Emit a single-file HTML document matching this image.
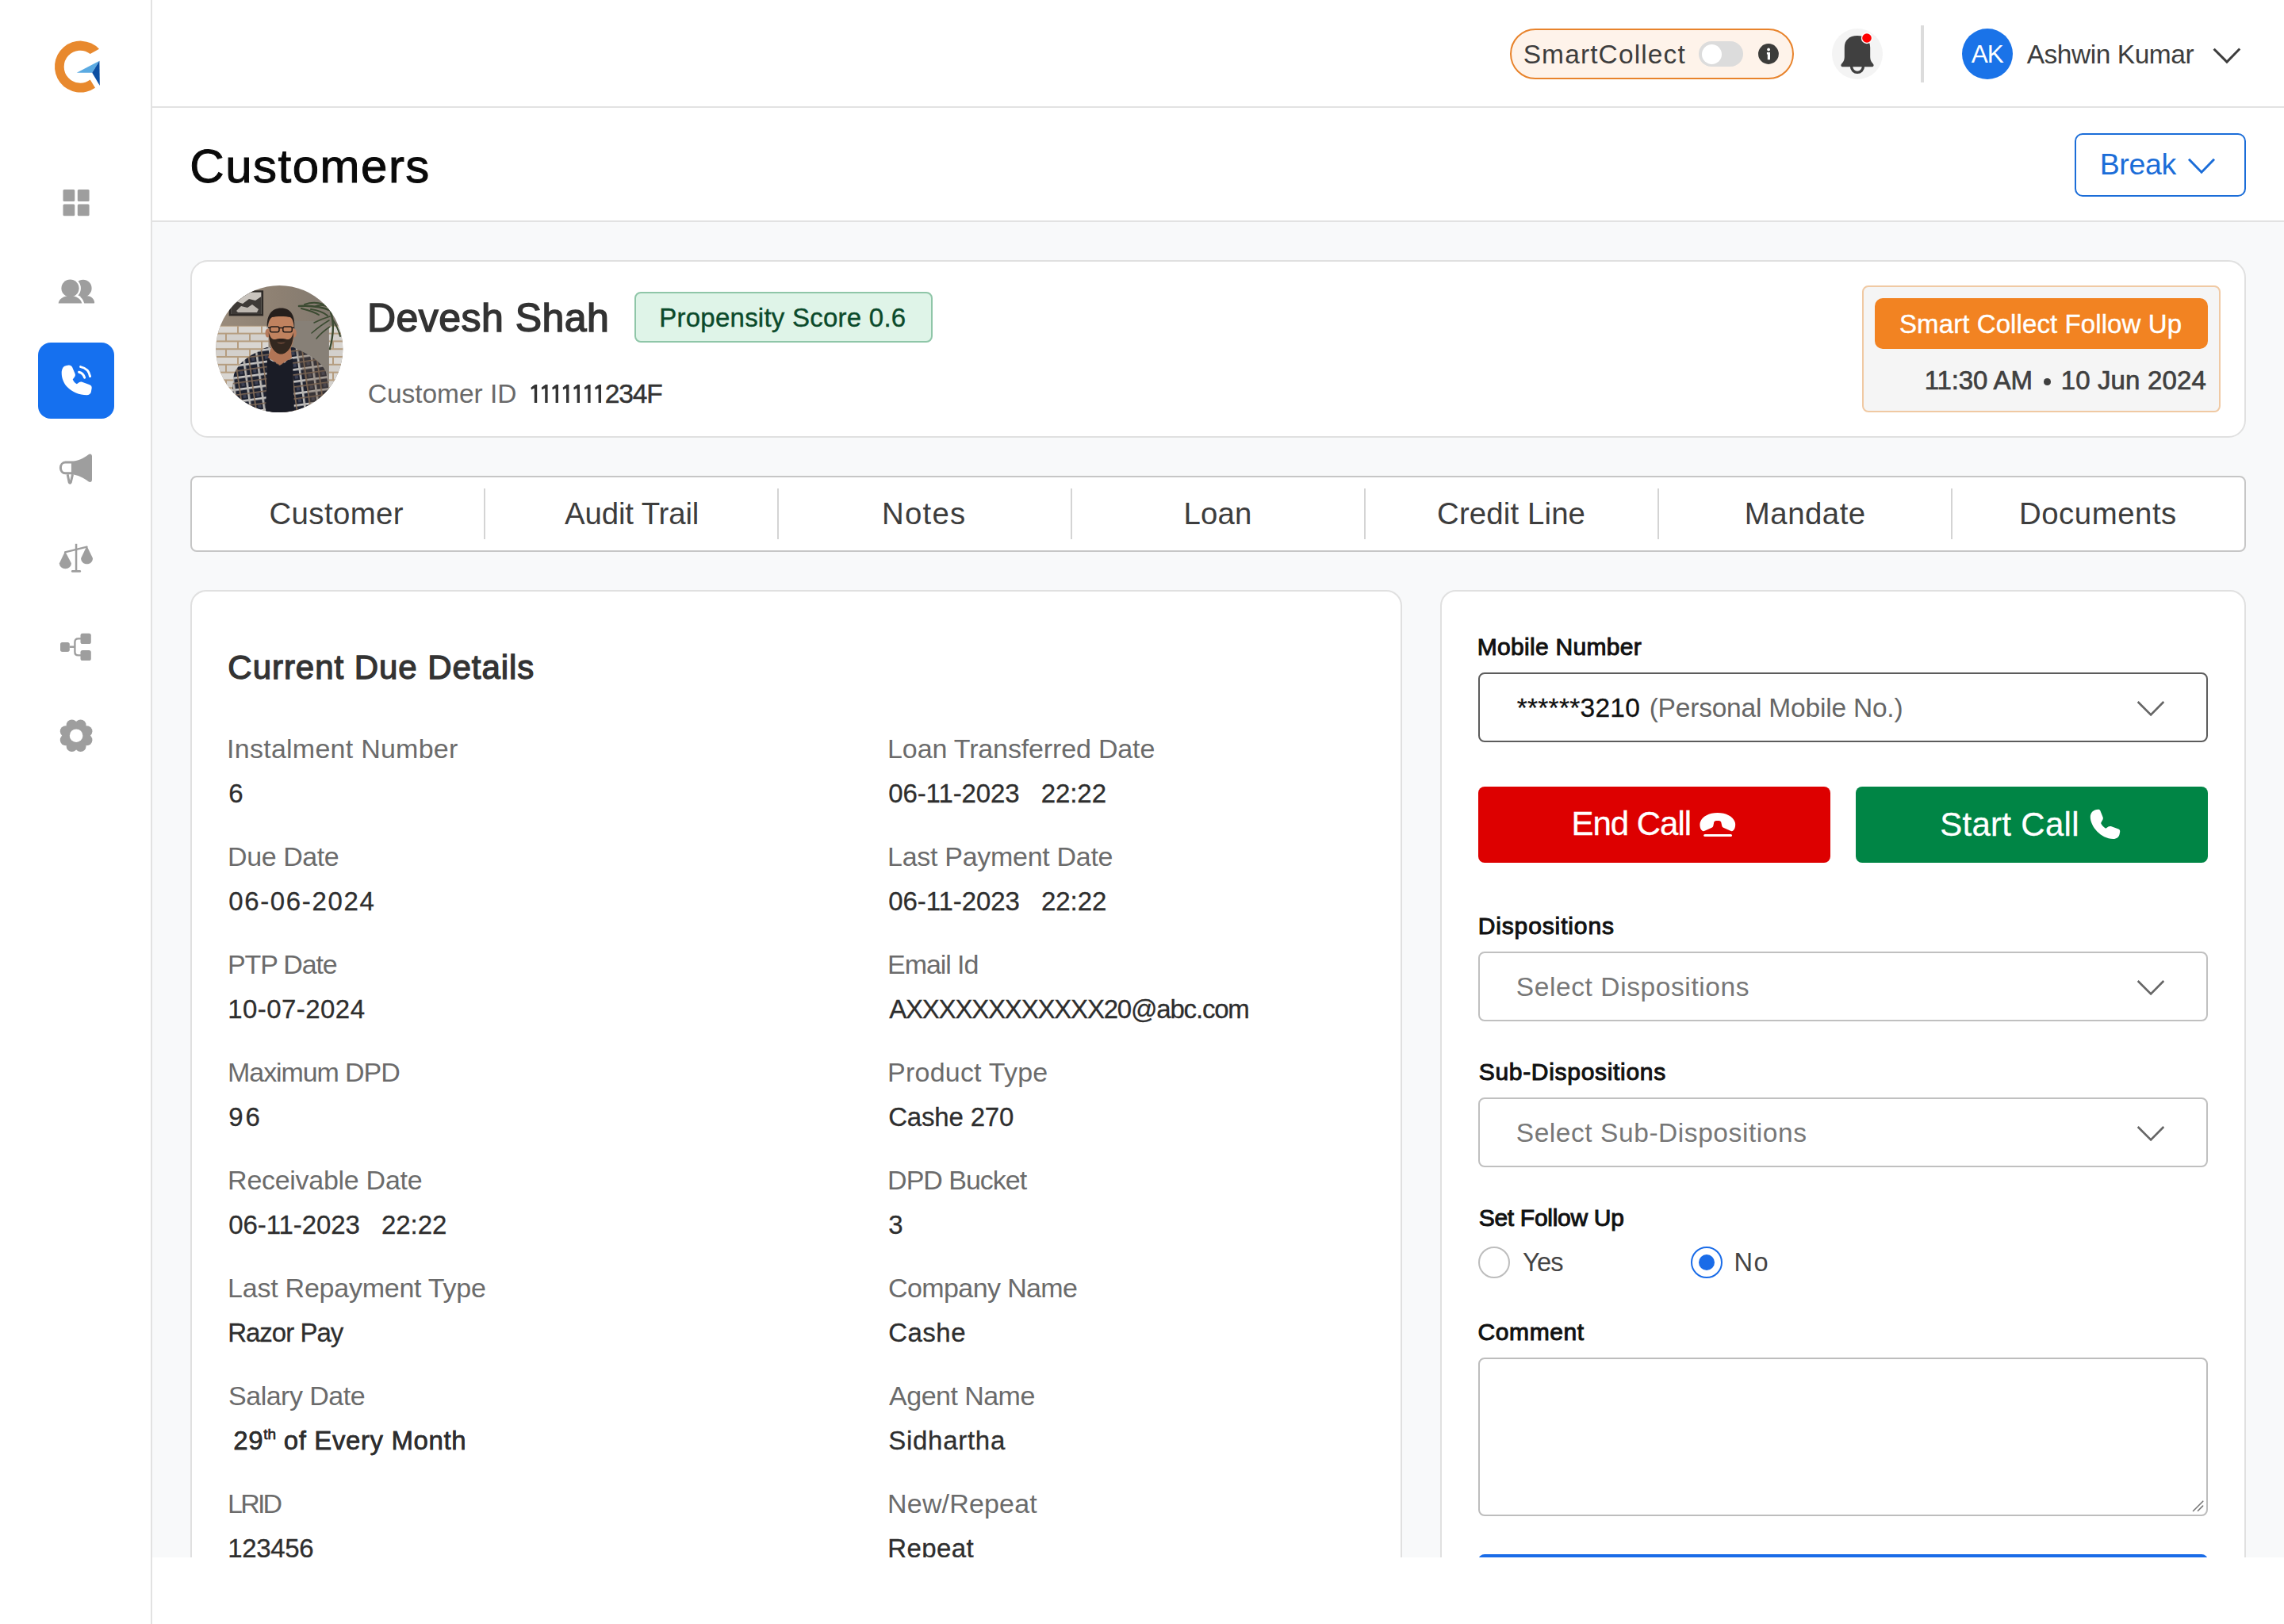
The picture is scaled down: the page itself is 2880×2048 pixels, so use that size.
<!DOCTYPE html>
<html><head><meta charset="utf-8">
<style>
html,body{margin:0;padding:0;}
body{width:2880px;height:2048px;overflow:hidden;background:#fff;position:relative;font-family:"Liberation Sans",sans-serif;}
.a{position:absolute;box-sizing:border-box;}
.t{position:absolute;white-space:nowrap;line-height:1;font-family:"Liberation Sans",sans-serif;}
svg{position:absolute;overflow:visible;}
</style></head><body>

<!-- SIDEBAR -->
<div class="a" style="left:0;top:0;width:192px;height:2048px;background:#fff;border-right:2px solid #e2e2e2;"></div>

<!-- HEADER -->
<div class="a" style="left:192px;top:0;width:2688px;height:136px;background:#fff;border-bottom:2px solid #e2e2e2;"></div>
<!-- TITLE BAR -->
<div class="a" style="left:192px;top:136px;width:2688px;height:144px;background:#fff;border-bottom:2px solid #e2e2e2;"></div>

<!-- MAIN CLIP -->
<div class="a" style="left:0;top:0;width:2880px;height:1964px;overflow:hidden;">
  <div class="a" style="left:192px;top:280px;width:2688px;height:1684px;background:#f8f9fa;"></div>

  <!-- customer card -->
  <div class="a" style="left:240px;top:328px;width:2592px;height:224px;background:#fff;border:2px solid #e0e0e0;border-radius:22px;"></div>
  <!-- propensity badge -->
  <div class="a" style="left:800px;top:368px;width:376px;height:64px;background:#dff4e8;border:2px solid #8fc6a8;border-radius:8px;"></div>
  <!-- follow up box -->
  <div class="a" style="left:2348px;top:360px;width:452px;height:160px;background:#f5f5f5;border:2px solid #f0c9a3;border-radius:8px;"></div>
  <div class="a" style="left:2364px;top:376px;width:420px;height:64px;background:#f28322;border-radius:10px;"></div>

  <!-- tabs -->
  <div class="a" style="left:240px;top:600px;width:2592px;height:96px;background:#fff;border:2px solid #c6c6c6;border-radius:8px;"></div>
  <div class="a" style="left:610px;top:616px;width:2px;height:64px;background:#d4d4d4;"></div>
  <div class="a" style="left:980px;top:616px;width:2px;height:64px;background:#d4d4d4;"></div>
  <div class="a" style="left:1350px;top:616px;width:2px;height:64px;background:#d4d4d4;"></div>
  <div class="a" style="left:1720px;top:616px;width:2px;height:64px;background:#d4d4d4;"></div>
  <div class="a" style="left:2090px;top:616px;width:2px;height:64px;background:#d4d4d4;"></div>
  <div class="a" style="left:2460px;top:616px;width:2px;height:64px;background:#d4d4d4;"></div>

  <!-- left card -->
  <div class="a" style="left:240px;top:744px;width:1528px;height:1400px;background:#fff;border:2px solid #e0e0e0;border-radius:20px;"></div>
  <!-- right card -->
  <div class="a" style="left:1816px;top:744px;width:1016px;height:1400px;background:#fff;border:2px solid #e0e0e0;border-radius:20px;"></div>

  <!-- mobile input -->
  <div class="a" style="left:1864px;top:848px;width:920px;height:88px;background:#fff;border:2.5px solid #5c5c5c;border-radius:8px;"></div>
  <!-- buttons -->
  <div class="a" style="left:1864px;top:992px;width:444px;height:96px;background:#dd0000;border-radius:8px;"></div>
  <div class="a" style="left:2340px;top:992px;width:444px;height:96px;background:#008545;border-radius:8px;"></div>
  <!-- selects -->
  <div class="a" style="left:1864px;top:1200px;width:920px;height:88px;background:#fff;border:2px solid #c0c0c0;border-radius:8px;"></div>
  <div class="a" style="left:1864px;top:1384px;width:920px;height:88px;background:#fff;border:2px solid #c0c0c0;border-radius:8px;"></div>
  <!-- textarea -->
  <div class="a" style="left:1864px;top:1712px;width:920px;height:200px;background:#fff;border:2px solid #bdbdbd;border-radius:8px;"></div>
  <!-- submit button (clipped) -->
  <div class="a" style="left:1864px;top:1960px;width:920px;height:96px;background:#1a6ce8;border-radius:8px;"></div>

  <!-- ===== LOGO ===== -->
<svg style="left:60px;top:48px" width="72" height="72" viewBox="60 48 72 72">
  <path d="M125,61.7 A32.5,32.5 0 1 0 120,110.8 L113.7,100.4 A20.5,20.5 0 1 1 113.7,67.9 Z" fill="#e8892e"/>
  <path d="M96.7,91.8 L125.4,76.7 L116.2,91.7 Z" fill="#5aaae2"/>
  <path d="M125.4,76.7 L116.2,91.7 L125.8,107.9 Z" fill="#0b4ea2"/>
</svg>

<!-- ===== SIDEBAR ICONS ===== -->
<svg style="left:60px;top:220px" width="72" height="180" viewBox="60 220 72 180">
  <g fill="#9e9e9e">
    <rect x="79.5" y="239" width="14.8" height="15" rx="1.5"/>
    <rect x="97.8" y="239" width="14.8" height="15" rx="1.5"/>
    <rect x="79.5" y="257.6" width="14.8" height="14.6" rx="1.5"/>
    <rect x="97.8" y="257.6" width="14.8" height="14.6" rx="1.5"/>
  </g>
  <!-- people -->
  <g fill="#9e9e9e">
    <circle cx="104.8" cy="363.5" r="10.8"/>
    <path d="M96,382.5 C97,376 101,373 108.5,373 C114.5,373 118.5,376.5 119.1,381 C119.3,382 118.8,382.5 118,382.5 Z"/>
  </g>
  <g fill="#9e9e9e" stroke="#fff" stroke-width="3.6">
    <circle cx="88.5" cy="363.5" r="11.6"/>
    <path d="M73.4,382.5 C74,376 80,372.6 88.4,372.6 C96.5,372.6 102.5,376 104.3,382.5 Z"/>
  </g>
  <g fill="#9e9e9e">
    <circle cx="88.5" cy="363.5" r="11.1"/>
    <path d="M73.6,382.5 C74.5,376.5 80,373.2 88.4,373.2 C96.5,373.2 101.8,376.5 103.3,382.5 Z"/>
  </g>
</svg>

<div class="a" style="left:48px;top:432px;width:96px;height:96px;background:#1570ef;border-radius:16px;"></div>
<svg style="left:70px;top:452px" width="56" height="56" viewBox="70 452 56 56">
  <path fill="#fff" d="M86.5,460.5 C88.8,460.3 90.2,461.5 91,462.8 L94.7,471.5 C95.3,473.2 94.6,474.8 93.6,476 L91.7,478.4 C92.8,480.9 94.6,483 96.9,484.3 L99.6,482.3 C100.8,481.4 102.3,481.2 103.6,481.7 L113.1,485.3 C114.9,486 115.9,487.5 115.7,489.3 L114.8,494.5 C114.3,496.8 111.8,498.2 109.6,498.2 C100,498.2 90.8,494 84.8,487.9 C80.2,483.3 77.7,476.8 77.7,470.2 C77.7,466.4 79.3,462.8 81.4,461.8 C82.9,461 84.7,460.6 86.5,460.5 Z"/>
  <path fill="none" stroke="#fff" stroke-width="3" stroke-linecap="round" d="M99.6,469.2 C103,470 105.6,472.6 106.6,476.2"/>
  <path fill="none" stroke="#fff" stroke-width="3" stroke-linecap="round" d="M101.6,462.6 C107.8,463.8 112.4,468.4 113.6,474.6"/>
</svg>

<svg style="left:60px;top:560px" width="72" height="400" viewBox="60 560 72 400">
  <!-- megaphone -->
  <g fill="#9e9e9e">
    <path d="M89.9,581.6 L89.9,598.2 C98,598.6 105.5,602.5 111.5,607.2 C113.6,608.8 116,607.8 116,605 L116,575.3 C116,572.6 113.6,571.6 111.5,573.2 C105.5,578 98,581.4 89.9,581.6 Z"/>
  </g>
  <path fill="none" stroke="#9e9e9e" stroke-width="3" stroke-linejoin="round" d="M90,583.1 L82.4,583.1 C78.8,583.1 76.4,586.2 76.4,589.9 C76.4,593.6 78.8,596.7 82.4,596.7 L90,596.7"/>
  <path fill="none" stroke="#9e9e9e" stroke-width="3" stroke-linejoin="round" d="M85.2,598.2 L87.2,608.2 C87.5,609.5 89,609.5 89.3,608.2 L91.6,598.2"/>
  <!-- scales -->
  <g fill="#9e9e9e">
    <rect x="94.8" y="685.8" width="2.5" height="34"/>
    <rect x="89.9" y="719" width="12.2" height="2.8" rx="1.4"/>
    <path d="M82.1,695.2 L74.9,710.3 C74.9,714.6 78.2,717.2 82.4,717.2 C86.6,717.2 89.9,714.6 89.9,710.3 Z"/>
    <path d="M109.5,688.6 L102.1,704 C102.1,708.4 105.4,711.3 109.6,711.3 C113.8,711.3 117,708.4 117,704 Z"/>
  </g>
  <path stroke="#9e9e9e" stroke-width="2.4" stroke-linecap="round" d="M82.1,696.3 L109.5,689.6"/>
  <!-- hierarchy -->
  <g fill="#9e9e9e">
    <rect x="76" y="810" width="11.8" height="11.9" rx="2.6"/>
    <rect x="101.5" y="798.8" width="13.3" height="13.3" rx="2.6"/>
    <rect x="101.5" y="819.9" width="13.3" height="13.1" rx="2.6"/>
  </g>
  <path fill="none" stroke="#9e9e9e" stroke-width="2.4" d="M87.7,815.8 L94.4,815.8 M102,805.4 L98.6,805.4 C95.9,805.4 94.4,807.2 94.4,809.8 L94.4,822.2 C94.4,824.8 95.9,826.4 98.6,826.4 L102,826.4"/>
  <!-- gear -->
  <g fill="#9e9e9e" transform="translate(96.1,927.7)">
    <circle r="15.5"/>
    <circle cx="5.5" cy="-13.3" r="7"/><circle cx="13.3" cy="-5.5" r="7"/>
    <circle cx="13.3" cy="5.5" r="7"/><circle cx="5.5" cy="13.3" r="7"/>
    <circle cx="-5.5" cy="13.3" r="7"/><circle cx="-13.3" cy="5.5" r="7"/>
    <circle cx="-13.3" cy="-5.5" r="7"/><circle cx="-5.5" cy="-13.3" r="7"/>
    <circle r="8.3" fill="#fff"/>
  </g>
</svg>

<!-- ===== HEADER ===== -->
<div class="a" style="left:1904px;top:36px;width:358px;height:64px;background:#fef3ea;border:2px solid #e8832b;border-radius:32px;"></div>
<div class="a" style="left:2142px;top:52px;width:56px;height:32px;background:#dcdcdc;border-radius:16px;"></div>
<div class="a" style="left:2145.5px;top:55.5px;width:25px;height:25px;background:#fff;border-radius:50%;"></div>
<svg style="left:2210px;top:48px" width="40" height="40" viewBox="2210 48 40 40">
  <circle cx="2229.95" cy="68" r="12.9" fill="#3c3c3a"/>
  <circle cx="2230.1" cy="62.5" r="1.9" fill="#fff"/>
  <path fill="#fff" d="M2227.9,65.9 L2232,65.9 L2232,75.3 L2228.8,75.3 L2228.8,68.4 L2227.9,68.4 Z"/>
</svg>
<svg style="left:2300px;top:30px" width="84" height="76" viewBox="2300 30 84 76">
  <circle cx="2342" cy="68" r="32" fill="#f4f4f4"/>
  <path fill="#404040" d="M2342,45 C2331.5,45 2325.8,51 2325.8,60 L2325.8,72 C2325.8,76 2324,78.5 2322.3,80.2 C2320.6,82 2321.3,84.2 2324,84.2 L2360,84.2 C2362.7,84.2 2363.4,82 2361.7,80.2 C2360,78.5 2358.2,76 2358.2,72 L2358.2,60 C2358.2,51 2352.5,45 2342,45 Z"/>
  <path fill="none" stroke="#404040" stroke-width="3.4" d="M2334.6,84 A7.4,7.4 0 0 0 2349.4,84"/>
  <circle cx="2354" cy="48" r="7.2" fill="#fff"/>
  <circle cx="2354" cy="48" r="5.8" fill="#f00"/>
</svg>
<div class="a" style="left:2422px;top:32px;width:4px;height:72px;background:#dcdcdc;"></div>
<div class="a" style="left:2474px;top:36px;width:64px;height:64px;background:#1a73e8;border-radius:50%;"></div>
<svg style="left:2780px;top:50px" width="56" height="40" viewBox="2780 50 56 40">
  <path fill="none" stroke="#3d3d3d" stroke-width="3" d="M2791.6,61.7 L2808,78 L2824.2,61.5"/>
</svg>

<!-- Break button -->
<div class="a" style="left:2616px;top:168px;width:216px;height:80px;background:#fff;border:2.5px solid #1b6dd8;border-radius:10px;"></div>
<svg style="left:2750px;top:190px" width="56" height="40" viewBox="2750 190 56 40">
  <path fill="none" stroke="#1b6dd8" stroke-width="3" d="M2760,200.8 L2776,217.2 L2792,200.8"/>
</svg>

<!-- ===== PHOTO ===== -->
<svg style="left:272px;top:360px" width="161" height="161" viewBox="272 360 161 161">
  <defs>
    <clipPath id="pc"><circle cx="352.3" cy="440" r="80"/></clipPath>
    <pattern id="brick" x="0" y="410.8" width="30" height="19.6" patternUnits="userSpaceOnUse">
      <rect width="30" height="19.6" fill="#b59d80"/>
      <rect x="1" y="1" width="28" height="7.8" fill="#d9d6d2"/>
      <rect x="-14" y="10.8" width="28" height="7.8" fill="#d3d0cc"/>
      <rect x="16" y="10.8" width="28" height="7.8" fill="#d3d0cc"/>
    </pattern>
    <pattern id="plaid" x="291" y="437" width="17" height="15" patternUnits="userSpaceOnUse" patternTransform="rotate(-8)">
      <rect width="17" height="15" fill="#1e2230"/>
      <rect x="0" y="0" width="17" height="2.6" fill="#c8c6c4"/>
      <rect x="0" y="0" width="2.6" height="15" fill="#b9b6b2"/>
      <rect x="7" y="0" width="1.6" height="15" fill="#8c735c"/>
      <rect x="0" y="7" width="17" height="1.6" fill="#7d6857"/>
      <rect x="11" y="9" width="4" height="4" fill="#3b3f52"/>
    </pattern>
    <linearGradient id="wall" x1="0" y1="0" x2="1" y2="0">
      <stop offset="0" stop-color="#9a8c7c"/>
      <stop offset="0.5" stop-color="#8d8072"/>
      <stop offset="1" stop-color="#7f786f"/>
    </linearGradient>
  </defs>
  <g clip-path="url(#pc)">
    <rect x="272" y="360" width="161" height="161" fill="url(#wall)"/>
    <!-- frame -->
    <rect x="288.7" y="366.3" width="43.4" height="32.1" fill="#2e2a27"/>
    <rect x="291.2" y="368.6" width="38.2" height="27.4" fill="#c9c4be"/>
    <path d="M291.2,396 L291.2,384 L298,380 L306,383 L314,377 L322,379 L329.4,374 L329.4,396 Z" fill="#3e3a37"/>
    <path d="M298,392 L304,386 L312,388 L318,384 L326,390 L324,394 L300,394 Z" fill="#bdb7b0"/>
    <!-- bricks left -->
    <rect x="272" y="410.8" width="66.5" height="85" fill="url(#brick)"/>
    <!-- column -->
    <rect x="370.4" y="405" width="44.5" height="90" fill="#878077"/>
    <!-- bricks right -->
    <rect x="414.9" y="410.8" width="18" height="80" fill="url(#brick)"/>
    <!-- plant -->
    <g fill="none" stroke="#3b4a31" stroke-linecap="round">
      <path d="M377,386 C392,385 406,387 418,392 C424,395 428,400 431,405" stroke-width="2.6"/>
      <path d="M380,389 C388,391 396,393 402,397" stroke-width="2"/>
      <path d="M384,384 C392,381 400,381 408,384" stroke-width="2"/>
      <path d="M392,390 C400,391 408,394 413,398" stroke-width="2"/>
      <path d="M398,386 C404,384 410,385 416,388" stroke-width="1.8"/>
      <path d="M417,394 C421,405 421,420 416,440" stroke-width="2.4"/>
      <path d="M415,404 C408,408 400,414 393,420" stroke-width="1.6"/>
      <path d="M416,412 C410,416 404,421 399,427" stroke-width="1.6"/>
      <path d="M416,399 C409,401 402,404 396,407" stroke-width="1.6"/>
      <path d="M420,404 C424,410 427,416 429,424" stroke-width="2"/>
      <path d="M422,398 C426,400 429,403 432,407" stroke-width="2"/>
    </g>
    <!-- shirt -->
    <path d="M292,521 L294,476 C298,458 314,448 336,438 L370,438 C392,448 410,458 414,478 L418,521 Z" fill="url(#plaid)"/>
    <path d="M372,440 C392,448 410,458 414,478 L418,521 L392,521 C390,500 384,470 372,440 Z" fill="#6b5545" opacity="0.35"/>
    <!-- t-shirt -->
    <path d="M337,452 L352.5,461 L369,452 L371,521 L335,521 Z" fill="#1a1c26"/>
    <!-- neck -->
    <path d="M342.5,436 L366.3,436 L368,451 L353,460.5 L338,451 Z" fill="#b27556"/>
    <!-- ears -->
    <ellipse cx="337.5" cy="420" rx="3" ry="5.5" fill="#b57a5c"/>
    <ellipse cx="370.8" cy="420" rx="3" ry="5.5" fill="#b57a5c"/>
    <!-- face -->
    <path d="M338.5,412 C338.5,398 345,391 354.5,391 C364,391 370.2,398 370.2,412 L370,426 C369.5,438 362.5,445.5 354.5,445.5 C346.5,445.5 339.5,438 339,426 Z" fill="#c0825f"/>
    <!-- beard -->
    <path d="M338.8,419 C339,436 346,446.5 354.5,446.5 C363,446.5 370,436 370.2,419 C368.5,425 366,428.5 362,428 C358,427 351,427 347,428 C343,428.5 340.5,425 338.8,419 Z" fill="#33271f"/>
    <path d="M347.5,428.5 C351,426.5 358,426.5 361.5,428.5 C358,430 351,430 347.5,428.5 Z" fill="#2a1f1a"/>
    <path d="M349,431.5 C352,432.5 357,432.5 360,431.5 C357,434 352,434 349,431.5 Z" fill="#8a5a45"/>
    <!-- hair -->
    <path d="M337,415 C335.5,398 342,388.5 354.5,388.5 C367,388.5 372.5,398 371.2,415 C370.5,407 369,402 366,400 C361,398.5 348,398.5 343,400 C340,402 338,407 337,415 Z" fill="#261f1c"/>
    <!-- glasses -->
    <g fill="none" stroke="#241c19" stroke-width="1.5">
      <rect x="340.5" y="412" width="11.5" height="6.8" rx="2.2"/>
      <rect x="356.8" y="412" width="11.5" height="6.8" rx="2.2"/>
      <path d="M352,413.5 L356.8,413.5 M338,413.2 L340.5,413.2 M368.3,413.2 L371,413.2"/>
    </g>
  </g>
</svg>

<!-- ===== RIGHT PANEL ICONS ===== -->
<svg style="left:2680px;top:870px" width="64" height="600" viewBox="2680 870 64 600">
  <g fill="none" stroke="#666" stroke-width="2.6">
    <path d="M2695.7,885 L2712.1,901.5 L2728.3,885"/>
    <path d="M2695.7,1237 L2712.1,1253.5 L2728.3,1237"/>
    <path d="M2695.7,1421 L2712.1,1437.5 L2728.3,1421"/>
  </g>
</svg>
<svg style="left:2130px;top:1015px" width="70" height="50" viewBox="2130 1015 70 50">
  <path fill="#fff" d="M2165.7,1024.9 C2155,1024.9 2146.5,1029.5 2144,1036.5 C2142.8,1040 2143.5,1045 2146,1047.3 C2147,1048.3 2148.3,1048.4 2149.5,1047.8 L2158.5,1043.8 C2159.6,1043.3 2160.2,1042.5 2160.4,1041.3 L2161.1,1037.4 C2161.4,1035.9 2162.6,1035.2 2164,1035.1 L2167.5,1035.1 C2169,1035.2 2170.1,1036 2170.4,1037.4 L2171.2,1041.3 C2171.4,1042.5 2172,1043.3 2173.1,1043.8 L2182.1,1047.8 C2183.3,1048.4 2184.6,1048.3 2185.6,1047.3 C2188.1,1045 2188.8,1040 2187.6,1036.5 C2185.1,1029.5 2176.6,1024.9 2165.7,1024.9 Z"/>
  <rect x="2148.2" y="1052" width="35.8" height="3" rx="1.5" fill="#fff"/>
</svg>
<svg style="left:2625px;top:1012px" width="60" height="56" viewBox="2625 1012 60 56">
  <path fill="#fff" d="M2645.9,1020.7 C2647,1020.7 2647.8,1021.2 2648.3,1022.2 L2651.6,1030.6 C2652.2,1032.2 2651.7,1033.8 2650.6,1035 L2649.1,1038 C2650.5,1041 2652.8,1043.4 2655.3,1044.8 L2658.4,1042.6 C2659.4,1041.9 2660.6,1041.7 2661.8,1042.1 L2671.3,1045.5 C2672.7,1046.1 2673.4,1047.4 2673.2,1048.9 L2672.6,1052 C2671.9,1055.8 2668.8,1058 2664.8,1058 C2648.5,1057.6 2636,1042 2635.8,1030.5 C2635.7,1025 2639.5,1020.8 2645.9,1020.7 Z"/>
</svg>

<!-- radios -->
<div class="a" style="left:1864px;top:1572px;width:40px;height:40px;border:2px solid #bdbdbd;border-radius:50%;background:#fff;"></div>
<div class="a" style="left:2132px;top:1572px;width:40px;height:40px;border:2.6px solid #1a6ce8;border-radius:50%;background:#fff;"></div>
<div class="a" style="left:2142px;top:1582px;width:20px;height:20px;background:#1a6ce8;border-radius:50%;"></div>

<!-- resize handle -->
<svg style="left:2760px;top:1885px" width="24" height="24" viewBox="2760 1885 24 24">
  <path stroke="#777" stroke-width="1.6" stroke-linecap="round" d="M2765.5,1905.5 L2777.8,1893.2 M2771.5,1905.2 L2777.6,1899.1"/>
</svg>

<!-- customer id ones -->
<svg style="left:660px;top:480px" width="110" height="32" viewBox="660 480 110 32">
  <path fill="#333" d="M673.8,485 L677.2,485 L677.2,508 L673.8,508 Z M674.2,485 L676.2,488.2 L670.0,491.6 L669.4,488.8 Z M687.2,485 L690.6,485 L690.6,508 L687.2,508 Z M687.6,485 L689.6,488.2 L683.4,491.6 L682.8,488.8 Z M700.6,485 L704.0,485 L704.0,508 L700.6,508 Z M701.0,485 L703.0,488.2 L696.8,491.6 L696.2,488.8 Z M714.0,485 L717.4,485 L717.4,508 L714.0,508 Z M714.4,485 L716.4,488.2 L710.2,491.6 L709.6,488.8 Z M727.6,485 L731.0,485 L731.0,508 L727.6,508 Z M728.0,485 L730.0,488.2 L723.8,491.6 L723.2,488.8 Z M741.2,485 L744.6,485 L744.6,508 L741.2,508 Z M741.6,485 L743.6,488.2 L737.4,491.6 L736.8,488.8 Z M754.6,485 L758.0,485 L758.0,508 L754.6,508 Z M755.0,485 L757.0,488.2 L750.8,491.6 L750.2,488.8 Z "/>
</svg>

<div class="a" style="left:2577px;top:477px;width:8.6px;height:8.6px;border-radius:50%;background:#404040;"></div>
<div class="t" id="smart" style="left:1920.66px;top:51.53px;font-size:33.5px;color:#3d3d3d;letter-spacing:1.122px;">SmartCollect</div>
<div class="t" id="ak" style="left:2485.80px;top:53.43px;font-size:31.5px;color:#fff;letter-spacing:-1.000px;">AK</div>
<div class="t" id="ashwin" style="left:2555.66px;top:51.83px;font-size:33.5px;color:#3d3d3d;letter-spacing:-0.455px;">Ashwin Kumar</div>
<div class="t" id="title" style="left:239.30px;top:179.60px;font-size:60px;color:#0a0a0a;letter-spacing:1.500px;-webkit-text-stroke:1.0px #0a0a0a;">Customers</div>
<div class="t" id="break" style="left:2647.67px;top:189.22px;font-size:37.5px;color:#1b6dd8;letter-spacing:-0.350px;">Break</div>
<div class="t" id="devesh" style="left:462.90px;top:375.80px;font-size:50px;color:#333;letter-spacing:0.480px;-webkit-text-stroke:1.5px #333;">Devesh Shah</div>
<div class="t" id="prop" style="left:831.29px;top:384.15px;font-size:33px;color:#0b4a2b;letter-spacing:0.240px;-webkit-text-stroke:0.4px #0b4a2b;">Propensity Score 0.6</div>
<div class="t" id="cid" style="left:463.75px;top:479.52px;font-size:33.5px;color:#6a6a6a;letter-spacing:-0.040px;">Customer ID</div>
<div class="t" id="cidv" style="left:762.66px;top:479.52px;font-size:33.5px;color:#333;letter-spacing:-1.132px;-webkit-text-stroke:0.5px #333;">234F</div>
<div class="t" id="scfu" style="left:2394.99px;top:391.65px;font-size:33px;color:#fff;letter-spacing:0.096px;-webkit-text-stroke:0.4px #fff;">Smart Collect Follow Up</div>
<div class="t" id="fdate1" style="left:2426.69px;top:463.35px;font-size:33px;color:#404040;letter-spacing:-0.101px;-webkit-text-stroke:0.7px #404040;">11:30 AM</div>
<div class="t" id="fdate2" style="left:2598.69px;top:463.35px;font-size:33px;color:#404040;letter-spacing:0.140px;-webkit-text-stroke:0.7px #404040;">10 Jun 2024</div>
<div class="t" id="tab0" style="left:339.51px;top:628.56px;font-size:38.4px;color:#3d3d3d;letter-spacing:0.378px;">Customer</div>
<div class="t" id="tab1" style="left:712.01px;top:628.56px;font-size:38.4px;color:#3d3d3d;letter-spacing:-0.140px;">Audit Trail</div>
<div class="t" id="tab2" style="left:1111.91px;top:628.56px;font-size:38.4px;color:#3d3d3d;letter-spacing:1.250px;">Notes</div>
<div class="t" id="tab3" style="left:1492.61px;top:628.56px;font-size:38.4px;color:#3d3d3d;letter-spacing:0.133px;">Loan</div>
<div class="t" id="tab4" style="left:1812.11px;top:628.56px;font-size:38.4px;color:#3d3d3d;letter-spacing:0.120px;">Credit Line</div>
<div class="t" id="tab5" style="left:2199.81px;top:628.56px;font-size:38.4px;color:#3d3d3d;letter-spacing:0.500px;">Mandate</div>
<div class="t" id="tab6" style="left:2546.01px;top:628.56px;font-size:38.4px;color:#3d3d3d;letter-spacing:0.516px;">Documents</div>
<div class="t" id="cdd" style="left:287.36px;top:820.80px;font-size:42px;color:#333;letter-spacing:0.952px;-webkit-text-stroke:1.3px #333;">Current Due Details</div>
<div class="t" id="lL0" style="left:286.12px;top:927.10px;font-size:34px;color:#6b6b6b;letter-spacing:0.250px;">Instalment Number</div>
<div class="t" id="vL0" style="left:288.19px;top:983.75px;font-size:33px;color:#2e2e2e;letter-spacing:0.000px;-webkit-text-stroke:0.3px #2e2e2e;">6</div>
<div class="t" id="lR0" style="left:1119.12px;top:927.10px;font-size:34px;color:#6b6b6b;letter-spacing:-0.150px;">Loan Transferred Date</div>
<div class="t" id="vR0" style="left:1120.19px;top:983.75px;font-size:33px;color:#2e2e2e;letter-spacing:-0.097px;-webkit-text-stroke:0.3px #2e2e2e;">06-11-2023&nbsp;&nbsp;&nbsp;22:22</div>
<div class="t" id="lL1" style="left:287.12px;top:1063.10px;font-size:34px;color:#6b6b6b;letter-spacing:-0.428px;">Due Date</div>
<div class="t" id="vL1" style="left:288.19px;top:1119.75px;font-size:33px;color:#2e2e2e;letter-spacing:1.650px;-webkit-text-stroke:0.3px #2e2e2e;">06-06-2024</div>
<div class="t" id="lR1" style="left:1119.12px;top:1063.10px;font-size:34px;color:#6b6b6b;letter-spacing:-0.299px;">Last Payment Date</div>
<div class="t" id="vR1" style="left:1120.19px;top:1119.75px;font-size:33px;color:#2e2e2e;letter-spacing:-0.076px;-webkit-text-stroke:0.3px #2e2e2e;">06-11-2023&nbsp;&nbsp;&nbsp;22:22</div>
<div class="t" id="lL2" style="left:287.12px;top:1199.10px;font-size:34px;color:#6b6b6b;letter-spacing:-1.177px;">PTP Date</div>
<div class="t" id="vL2" style="left:287.19px;top:1255.75px;font-size:33px;color:#2e2e2e;letter-spacing:0.444px;-webkit-text-stroke:0.3px #2e2e2e;">10-07-2024</div>
<div class="t" id="lR2" style="left:1119.12px;top:1199.10px;font-size:34px;color:#6b6b6b;letter-spacing:-1.084px;">Email Id</div>
<div class="t" id="vR2" style="left:1121.19px;top:1255.75px;font-size:33px;color:#2e2e2e;letter-spacing:-1.201px;-webkit-text-stroke:0.3px #2e2e2e;">AXXXXXXXXXXXX20@abc.com</div>
<div class="t" id="lL3" style="left:287.12px;top:1335.10px;font-size:34px;color:#6b6b6b;letter-spacing:-1.100px;">Maximum DPD</div>
<div class="t" id="vL3" style="left:288.19px;top:1391.75px;font-size:33px;color:#2e2e2e;letter-spacing:3.000px;-webkit-text-stroke:0.3px #2e2e2e;">96</div>
<div class="t" id="lR3" style="left:1119.12px;top:1335.10px;font-size:34px;color:#6b6b6b;letter-spacing:0.213px;">Product Type</div>
<div class="t" id="vR3" style="left:1120.19px;top:1391.75px;font-size:33px;color:#2e2e2e;letter-spacing:-0.175px;-webkit-text-stroke:0.3px #2e2e2e;">Cashe 270</div>
<div class="t" id="lL4" style="left:287.12px;top:1471.10px;font-size:34px;color:#6b6b6b;letter-spacing:-0.286px;">Receivable Date</div>
<div class="t" id="vL4" style="left:288.19px;top:1527.75px;font-size:33px;color:#2e2e2e;letter-spacing:-0.079px;-webkit-text-stroke:0.3px #2e2e2e;">06-11-2023&nbsp;&nbsp;&nbsp;22:22</div>
<div class="t" id="lR4" style="left:1119.12px;top:1471.10px;font-size:34px;color:#6b6b6b;letter-spacing:-1.017px;">DPD Bucket</div>
<div class="t" id="vR4" style="left:1120.19px;top:1527.75px;font-size:33px;color:#2e2e2e;letter-spacing:0.000px;-webkit-text-stroke:0.3px #2e2e2e;">3</div>
<div class="t" id="lL5" style="left:287.12px;top:1607.10px;font-size:34px;color:#6b6b6b;letter-spacing:-0.246px;">Last Repayment Type</div>
<div class="t" id="vL5" style="left:287.19px;top:1663.75px;font-size:33px;color:#2e2e2e;letter-spacing:-1.000px;-webkit-text-stroke:0.3px #2e2e2e;">Razor Pay</div>
<div class="t" id="lR5" style="left:1120.12px;top:1607.10px;font-size:34px;color:#6b6b6b;letter-spacing:-0.617px;">Company Name</div>
<div class="t" id="vR5" style="left:1120.19px;top:1663.75px;font-size:33px;color:#2e2e2e;letter-spacing:0.500px;-webkit-text-stroke:0.3px #2e2e2e;">Cashe</div>
<div class="t" id="lL6" style="left:288.12px;top:1743.10px;font-size:34px;color:#6b6b6b;letter-spacing:-0.520px;">Salary Date</div>
<div class="t" id="lR6" style="left:1121.12px;top:1743.10px;font-size:34px;color:#6b6b6b;letter-spacing:-0.532px;">Agent Name</div>
<div class="t" id="vR6" style="left:1120.19px;top:1799.75px;font-size:33px;color:#2e2e2e;letter-spacing:0.725px;-webkit-text-stroke:0.3px #2e2e2e;">Sidhartha</div>
<div class="t" id="lL7" style="left:287.12px;top:1879.10px;font-size:34px;color:#6b6b6b;letter-spacing:-2.799px;">LRID</div>
<div class="t" id="vL7" style="left:287.19px;top:1935.75px;font-size:33px;color:#2e2e2e;letter-spacing:-0.320px;-webkit-text-stroke:0.3px #2e2e2e;">123456</div>
<div class="t" id="lR7" style="left:1119.12px;top:1879.10px;font-size:34px;color:#6b6b6b;letter-spacing:0.159px;">New/Repeat</div>
<div class="t" id="vR7" style="left:1119.19px;top:1935.75px;font-size:33px;color:#2e2e2e;letter-spacing:0.400px;-webkit-text-stroke:0.3px #2e2e2e;">Repeat</div>
<div class="t" id="mob" style="left:1862.80px;top:800.80px;font-size:30px;color:#111;letter-spacing:0.285px;-webkit-text-stroke:1.0px #111;">Mobile Number</div>
<div class="t" id="mobv1" style="left:1912.66px;top:875.82px;font-size:33.5px;color:#111;letter-spacing:0.276px;-webkit-text-stroke:0.3px #111;">******3210</div>
<div class="t" id="mobv2" style="left:2079.66px;top:875.82px;font-size:33.5px;color:#666;letter-spacing:-0.200px;">(Personal Mobile No.)</div>
<div class="t" id="endc" style="left:1981.46px;top:1018.30px;font-size:42px;color:#fff;letter-spacing:-1.025px;-webkit-text-stroke:0.3px #fff;">End Call</div>
<div class="t" id="startc" style="left:2446.16px;top:1018.80px;font-size:42px;color:#fff;letter-spacing:0.294px;-webkit-text-stroke:0.3px #fff;">Start Call</div>
<div class="t" id="disp" style="left:1863.70px;top:1153.20px;font-size:30px;color:#111;letter-spacing:0.869px;-webkit-text-stroke:1.0px #111;">Dispositions</div>
<div class="t" id="seld" style="left:1911.76px;top:1227.53px;font-size:33.5px;color:#777;letter-spacing:0.598px;">Select Dispositions</div>
<div class="t" id="subd" style="left:1864.70px;top:1336.50px;font-size:30px;color:#111;letter-spacing:0.697px;-webkit-text-stroke:1.0px #111;">Sub-Dispositions</div>
<div class="t" id="selsub" style="left:1911.76px;top:1411.93px;font-size:33.5px;color:#777;letter-spacing:0.562px;">Select Sub-Dispositions</div>
<div class="t" id="sfu" style="left:1864.70px;top:1520.50px;font-size:30px;color:#111;letter-spacing:-0.298px;-webkit-text-stroke:1.0px #111;">Set Follow Up</div>
<div class="t" id="yes" style="left:1920.12px;top:1575.79px;font-size:32.6px;color:#444;letter-spacing:-0.900px;">Yes</div>
<div class="t" id="no" style="left:2186.52px;top:1575.79px;font-size:32.6px;color:#444;letter-spacing:1.400px;">No</div>
<div class="t" id="comm" style="left:1863.60px;top:1664.50px;font-size:30px;color:#111;letter-spacing:0.565px;-webkit-text-stroke:1.0px #111;">Comment</div>
<div class="t" id="sal" style="left:294.19px;top:1799.75px;font-size:33px;color:#2e2e2e;letter-spacing:0.611px;-webkit-text-stroke:0.3px #2e2e2e;">29<span style="font-size:19px;position:relative;top:-13px;letter-spacing:0">th</span> of Every Month</div>
<div class="t" id="sal" style="left:294.19px;top:1799.75px;font-size:33px;color:#2e2e2e;letter-spacing:0.611px;-webkit-text-stroke:0.3px #2e2e2e;">29<span style="font-size:19px;position:relative;top:-13px;letter-spacing:0">th</span> of Every Month</div>

</div>


</body></html>
